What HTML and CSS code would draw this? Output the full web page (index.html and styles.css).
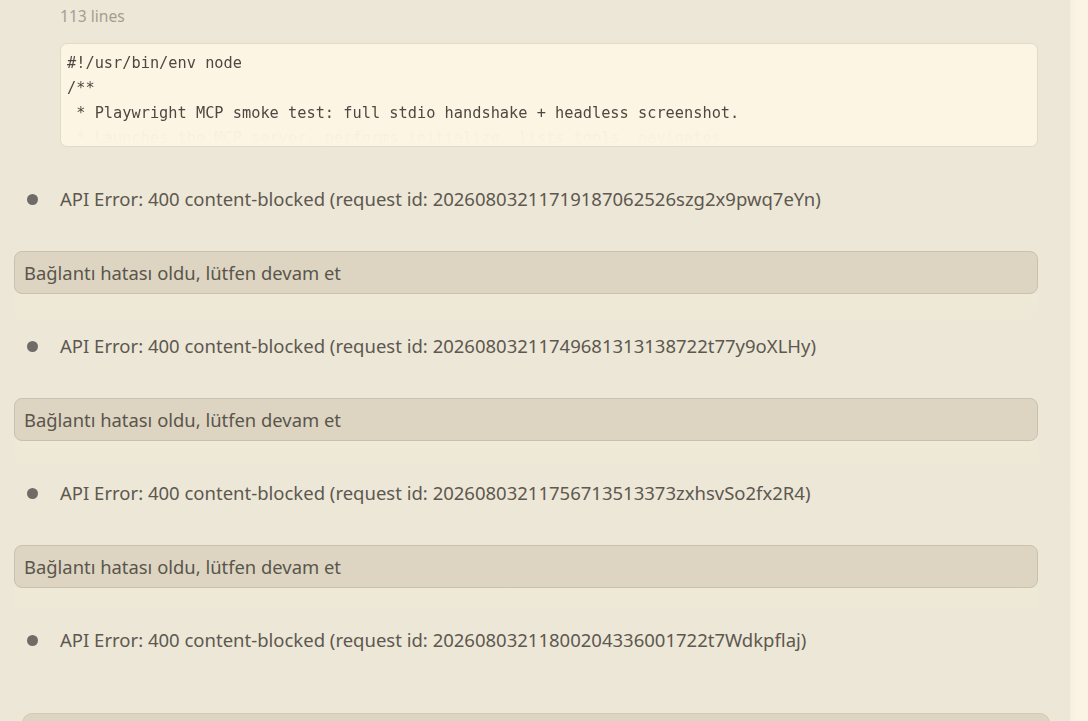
FILE: index.html
```html
<!DOCTYPE html>
<html>
<head>
<meta charset="utf-8">
<link rel="stylesheet" href="styles.css">
</head>
<body>
<div class="page">
  <main class="chat">
    <section class="tool">
      <div class="tool-meta">113 lines</div>
      <div class="code">
        <pre class="code-text">#!/usr/bin/env node
/**
 * Playwright MCP smoke test: full stdio handshake + headless screenshot.
 * Launches the MCP server, performs initialize, lists tools, navigates.</pre>
      </div>
    </section>

    <div class="err-row"><span class="dot"></span><span class="err-text">API Error: 400 content-blocked (request id: 20260803211719187062526szg2x9pwq7eYn)</span></div>
    <div class="bubble">Bağlantı hatası oldu, lütfen devam et</div>

    <div class="err-row"><span class="dot"></span><span class="err-text">API Error: 400 content-blocked (request id: 20260803211749681313138722t77y9oXLHy)</span></div>
    <div class="bubble">Bağlantı hatası oldu, lütfen devam et</div>

    <div class="err-row"><span class="dot"></span><span class="err-text">API Error: 400 content-blocked (request id: 20260803211756713513373zxhsvSo2fx2R4)</span></div>
    <div class="bubble">Bağlantı hatası oldu, lütfen devam et</div>

    <div class="err-row"><span class="dot"></span><span class="err-text">API Error: 400 content-blocked (request id: 20260803211800204336001722t7Wdkpflaj)</span></div>

    <div class="composer"></div>
  </main>
  <div class="scrollbar"></div>
</div>
</body>
</html>
```

FILE: styles.css
```css
html, body {
  margin: 0;
  padding: 0;
  height: 100%;
  overflow: hidden;
}
body {
  background: #ede7d7;
  font-family: "Noto Sans", "Open Sans", sans-serif;
  color: #5b564e;
}
.page {
  display: flex;
  height: 721px;
}
.chat {
  width: 1070px;
  box-sizing: border-box;
  padding: 0 32px 0 14px;
  display: flex;
  flex-direction: column;
}
.scrollbar {
  width: 18px;
  background: linear-gradient(90deg, #f7efdd 0%, #fbf4e4 40%, #fbf4e4 100%);
}
.tool {
  padding-left: 46px;
  display: flex;
  flex-direction: column;
}
.tool-meta {
  height: 32px;
  line-height: 32px;
  font-size: 15.6px;
  color: #a49e91;
}
.code {
  margin-top: 11px;
  height: 104px;
  box-sizing: border-box;
  background: #fdf5e4;
  border: 1px solid #e2dac7;
  border-radius: 7px;
  overflow: hidden;
  padding: 7px 6px 0;
}
.code-text {
  margin: 0;
  font-family: "DejaVu Sans Mono", "Liberation Mono", monospace;
  font-size: 15.3px;
  line-height: 25px;
  color: #4d4842;
  -webkit-mask-image: linear-gradient(180deg, #000 0, #000 70px, rgba(0,0,0,0.04) 78px, rgba(0,0,0,0.02) 88px, transparent 96px);
  mask-image: linear-gradient(180deg, #000 0, #000 70px, rgba(0,0,0,0.04) 78px, rgba(0,0,0,0.02) 88px, transparent 96px);
}
.err-row {
  height: 104px;
  box-sizing: border-box;
  padding-bottom: 2px;
  display: flex;
  align-items: center;
  flex-shrink: 0;
}
.bubble + .err-row {
  background: linear-gradient(180deg, #efe9d8 0, #eee8d7 14px, #ede7d7 30px);
}
.dot {
  width: 11px;
  height: 11px;
  border-radius: 50%;
  background: #6f6c68;
  margin: 2px 22px 0 13px;
  flex-shrink: 0;
}
.err-text {
  font-size: 18.5px;
  color: #5d5850;
  white-space: nowrap;
}
.bubble {
  height: 43px;
  box-sizing: border-box;
  flex-shrink: 0;
  background: #ddd5c2;
  border: 1px solid #c9c1ad;
  border-radius: 8px;
  padding: 0 9px;
  display: flex;
  align-items: center;
  font-size: 18.4px;
  color: #5a554c;
}
.composer {
  margin-top: 21px;
  margin-left: 8px;
  margin-right: -12px;
  height: 40px;
  flex-shrink: 0;
  background: #ddd5c2;
  border: 1px solid #d3cbb8;
  border-radius: 10px;
}
```
